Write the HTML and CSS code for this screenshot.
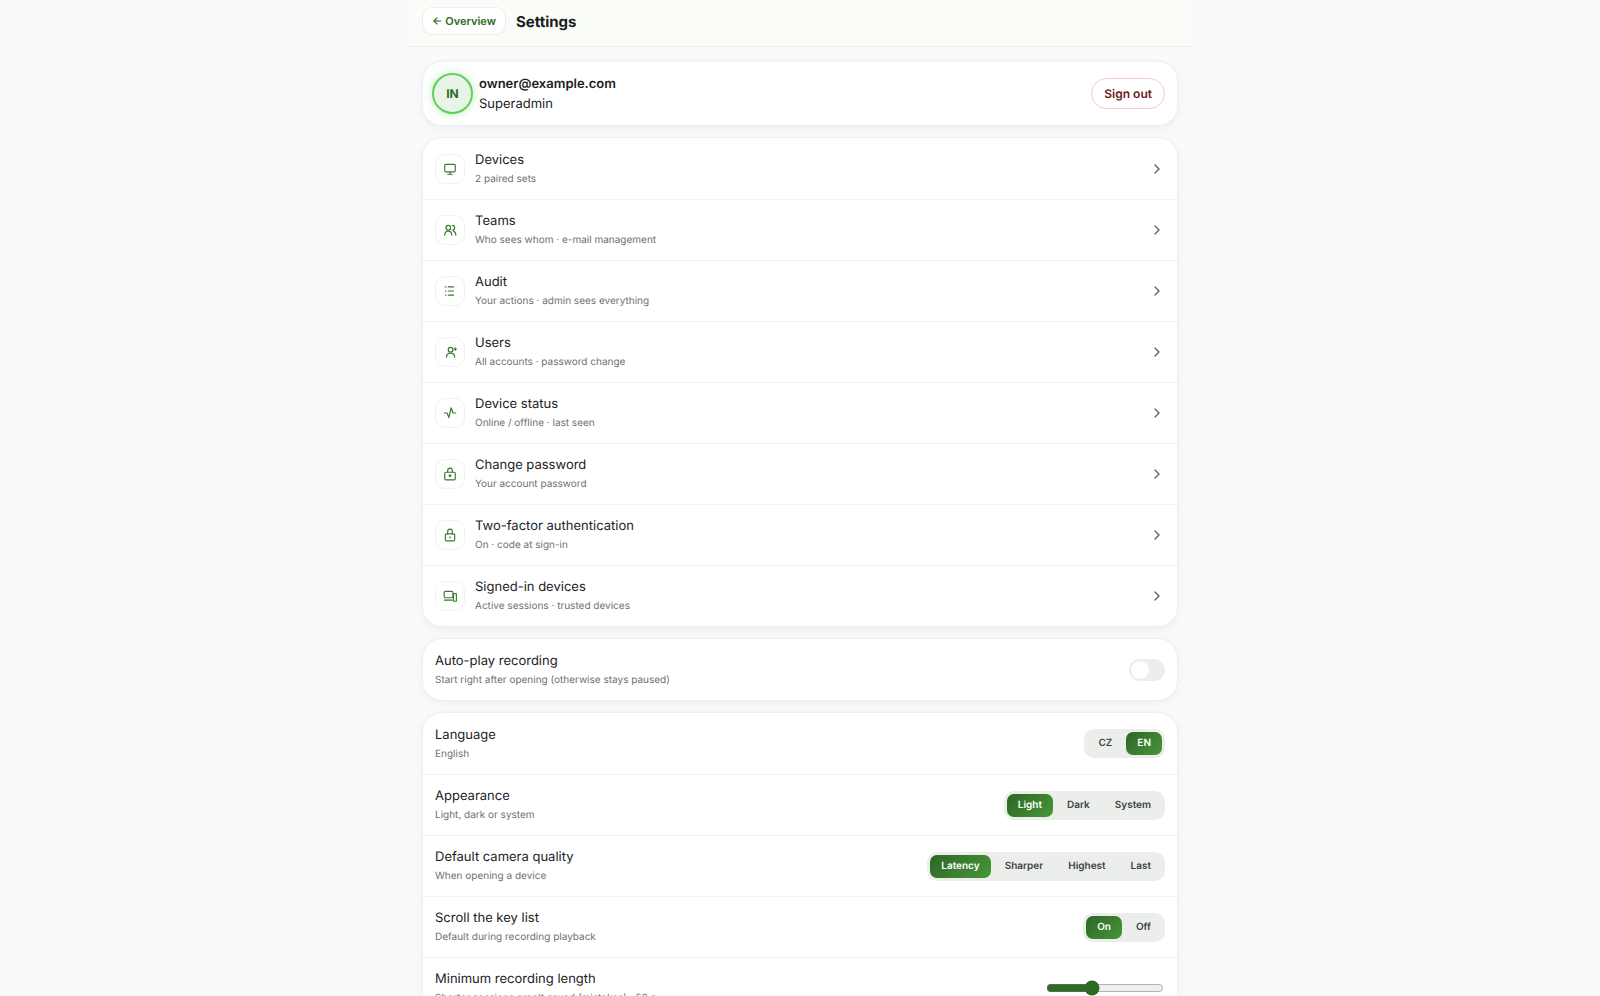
FILE: index.html
```
<!DOCTYPE html>
<html lang="en">
<head>
    <meta charset="UTF-8">
    <meta name="viewport" content="width=device-width, initial-scale=1.0">
    <title>Settings</title>
    <link rel="stylesheet" href="styles.css">
</head>
<body>
    <div class="page">
        <header class="topbar">
            <a href="#overview" class="back">← Overview</a>
            <h1>Settings</h1>
        </header>

        <main>
            <section class="card account">
                <div class="avatar">IN</div>
                <div class="who">
                    <strong>owner@example.com</strong>
                    <span>Superadmin</span>
                </div>
                <button type="button" class="signout">Sign out</button>
            </section>

            <nav class="card" aria-label="Settings sections">
                <a href="#devices" class="row">
                    <span class="icon"><svg viewBox="0 0 24 24"><rect x="3" y="4" width="18" height="13" rx="2"/><path d="M12 17v4M8 21h8"/></svg></span>
                    <span class="text"><span class="title">Devices</span><span class="sub">2 paired sets</span></span>
                    <svg class="chevron" viewBox="0 0 24 24"><path d="M9 6l6 6-6 6"/></svg>
                </a>
                <a href="#teams" class="row">
                    <span class="icon"><svg viewBox="0 0 24 24"><circle cx="9" cy="8" r="4"/><path d="M3 21c0-4 2-7 6-7s6 3 6 7M16 4a4 4 0 0 1 0 8M18 14c3 1 4 4 4 7"/></svg></span>
                    <span class="text"><span class="title">Teams</span><span class="sub">Who sees whom · e-mail management</span></span>
                    <svg class="chevron" viewBox="0 0 24 24"><path d="M9 6l6 6-6 6"/></svg>
                </a>
                <a href="#audit" class="row">
                    <span class="icon"><svg viewBox="0 0 24 24"><path d="M9 5h9M9 12h9M9 19h9M4 5h1M4 12h1M4 19h1"/></svg></span>
                    <span class="text"><span class="title">Audit</span><span class="sub">Your actions · admin sees everything</span></span>
                    <svg class="chevron" viewBox="0 0 24 24"><path d="M9 6l6 6-6 6"/></svg>
                </a>
                <a href="#users" class="row">
                    <span class="icon"><svg viewBox="0 0 24 24"><circle cx="13" cy="8" r="4"/><path d="M6 21c0-4 3-7 7-7s7 3 7 7M21 5v4M19 7h4"/></svg></span>
                    <span class="text"><span class="title">Users</span><span class="sub">All accounts · password change</span></span>
                    <svg class="chevron" viewBox="0 0 24 24"><path d="M9 6l6 6-6 6"/></svg>
                </a>
                <a href="#status" class="row">
                    <span class="icon"><svg viewBox="0 0 24 24"><path d="M2 12h5l3 8 4-17 3 9h5"/></svg></span>
                    <span class="text"><span class="title">Device status</span><span class="sub">Online / offline · last seen</span></span>
                    <svg class="chevron" viewBox="0 0 24 24"><path d="M9 6l6 6-6 6"/></svg>
                </a>
                <a href="#password" class="row">
                    <span class="icon"><svg viewBox="0 0 24 24"><rect x="3" y="9" width="18" height="13" rx="2"/><path d="M8 9V6a4 4 0 0 1 8 0v3"/><circle cx="12" cy="15" r="1.5"/></svg></span>
                    <span class="text"><span class="title">Change password</span><span class="sub">Your account password</span></span>
                    <svg class="chevron" viewBox="0 0 24 24"><path d="M9 6l6 6-6 6"/></svg>
                </a>
                <a href="#two-factor" class="row">
                    <span class="icon"><svg viewBox="0 0 24 24"><rect x="4" y="10" width="16" height="12" rx="2"/><path d="M8 10V6a4 4 0 0 1 8 0v4M12 15v2"/></svg></span>
                    <span class="text"><span class="title">Two-factor authentication</span><span class="sub">On · code at sign-in</span></span>
                    <svg class="chevron" viewBox="0 0 24 24"><path d="M9 6l6 6-6 6"/></svg>
                </a>
                <a href="#sessions" class="row">
                    <span class="icon"><svg viewBox="0 0 24 24"><rect x="2" y="4" width="15" height="11" rx="2"/><path d="M2 19h14"/><rect x="18" y="8" width="5" height="13" rx="1"/></svg></span>
                    <span class="text"><span class="title">Signed-in devices</span><span class="sub">Active sessions · trusted devices</span></span>
                    <svg class="chevron" viewBox="0 0 24 24"><path d="M9 6l6 6-6 6"/></svg>
                </a>
            </nav>

            <section class="card">
                <div class="row">
                    <label class="text" for="autoplay"><span class="title">Auto-play recording</span><span class="sub">Start right after opening (otherwise stays paused)</span></label>
                    <input type="checkbox" role="switch" class="switch" id="autoplay">
                </div>
            </section>

            <section class="card">
                <div class="row">
                    <div class="text"><span class="title">Language</span><span class="sub">English</span></div>
                    <div class="segmented" role="group" aria-label="Language">
                        <button type="button">CZ</button>
                        <button type="button" class="active">EN</button>
                    </div>
                </div>
                <div class="row">
                    <div class="text"><span class="title">Appearance</span><span class="sub">Light, dark or system</span></div>
                    <div class="segmented" role="group" aria-label="Appearance">
                        <button type="button" class="active">Light</button>
                        <button type="button">Dark</button>
                        <button type="button">System</button>
                    </div>
                </div>
                <div class="row">
                    <div class="text"><span class="title">Default camera quality</span><span class="sub">When opening a device</span></div>
                    <div class="segmented" role="group" aria-label="Default camera quality">
                        <button type="button" class="active">Latency</button>
                        <button type="button">Sharper</button>
                        <button type="button">Highest</button>
                        <button type="button">Last</button>
                    </div>
                </div>
                <div class="row">
                    <div class="text"><span class="title">Scroll the key list</span><span class="sub">Default during recording playback</span></div>
                    <div class="segmented" role="group" aria-label="Scroll the key list">
                        <button type="button" class="active">On</button>
                        <button type="button">Off</button>
                    </div>
                </div>
                <div class="row">
                    <label class="text" for="minLength"><span class="title">Minimum recording length</span><span class="sub">Shorter sessions aren't saved (mistakes) · 50 s</span></label>
                    <input type="range" class="slider" id="minLength" min="0" max="100" value="37">
                </div>
            </section>
        </main>
    </div>

    <script>
        document.querySelectorAll('.segmented').forEach(group => {
            group.addEventListener('click', event => {
                const button = event.target.closest('button');
                if (!button) {
                    return;
                }
                group.querySelectorAll('button').forEach(b => b.classList.remove('active'));
                button.classList.add('active');
            });
        });
    </script>
</body>
</html>
```
FILE: styles.css
```
* {
    box-sizing: border-box;
}
html {
    scrollbar-width: none;
}
body {
    margin: 0;
    background-color: #fafafa;
    color: #1b1d1f;
    font-family: Inter, sans-serif;
    font-size: 13px;
    line-height: 19px;
    text-rendering: geometricPrecision;
}
button {
    font-family: inherit;
    text-rendering: inherit;
    cursor: pointer;
}
a {
    color: inherit;
    text-decoration: none;
}
.page {
    max-width: 784px;
    margin: 0 auto;
}
.topbar {
    display: flex;
    align-items: center;
    gap: 10px;
    padding: 7px 14px 11px;
    background-color: #fafcf8;
    border-bottom: 1px solid #eceff0;
}
.back {
    padding: 3px 9px;
    border: 1px solid #eceeed;
    border-radius: 10px;
    background-color: #fff;
    color: #2d6a24;
    font-size: 11px;
    font-weight: 600;
    line-height: 20px;
}
h1 {
    margin: 0;
    font-size: 15px;
    font-weight: 700;
}
main {
    display: flex;
    flex-direction: column;
    gap: 11px;
    padding: 14px;
}
.card {
    border: 1px solid #eeefef;
    border-radius: 20px;
    background-color: #fff;
    box-shadow: 0 2px 8px rgba(0, 0, 0, 0.06);
}
.account {
    display: flex;
    align-items: center;
    gap: 6px;
    padding: 11px 12px 11px 9px;
}
.avatar {
    display: flex;
    align-items: center;
    justify-content: center;
    width: 41px;
    height: 41px;
    border: 2px solid #5fd15a;
    border-radius: 50%;
    background-color: #e8f4e8;
    box-shadow: 0 0 8px rgba(95, 209, 90, 0.4);
    color: #2d6a24;
    font-size: 12px;
    font-weight: 700;
}
.who {
    flex: 1;
    display: flex;
    flex-direction: column;
    line-height: 20px;
}
.who strong {
    font-weight: 600;
}
.signout {
    padding: 5px 12px;
    border: 1px solid #f3cccc;
    border-radius: 16px;
    background-color: #fff;
    color: #6b2020;
    font-size: 12px;
    font-weight: 600;
    line-height: 19px;
}
.row {
    display: flex;
    align-items: center;
    gap: 10px;
    min-height: 61px;
    padding: 0 12px;
    border-top: 1px solid #f0f1f1;
}
.row:first-child {
    border-top: none;
}
.icon {
    display: flex;
    align-items: center;
    justify-content: center;
    width: 30px;
    height: 30px;
    border: 1px solid #f0f1f1;
    border-radius: 10px;
}
.icon svg {
    width: 14px;
    height: 14px;
}
svg {
    fill: none;
    stroke: #3a7a32;
    stroke-width: 2;
    stroke-linecap: round;
    stroke-linejoin: round;
}
.text {
    flex: 1;
    display: flex;
    flex-direction: column;
    padding-top: 2px;
}
.sub {
    color: #6b7276;
    font-size: 10px;
}
.chevron {
    width: 16px;
    height: 16px;
    stroke: #5c6366;
}
.switch {
    appearance: none;
    width: 36px;
    height: 22px;
    margin: 0;
    padding: 2px;
    border-radius: 11px;
    background-color: #eceeec;
    cursor: pointer;
}
.switch::before {
    content: "";
    display: block;
    width: 18px;
    height: 18px;
    border-radius: 50%;
    background-color: #fff;
}
.switch:checked {
    padding-left: 16px;
    background-color: #2d6a24;
}
.segmented {
    display: flex;
    gap: 3px;
    padding: 3px;
    border-radius: 10px;
    background-color: #eceeec;
}
.segmented button {
    padding: 2px 11px;
    border: none;
    border-radius: 7px;
    background: none;
    color: #3c4245;
    font-size: 10px;
    font-weight: 600;
    line-height: 19px;
}
.segmented .active {
    background: linear-gradient(135deg, #2f6627, #479638);
    color: #fff;
}
.slider {
    width: 118px;
    height: 16px;
    margin: 0 1px;
    accent-color: #2d6a24;
}
```
